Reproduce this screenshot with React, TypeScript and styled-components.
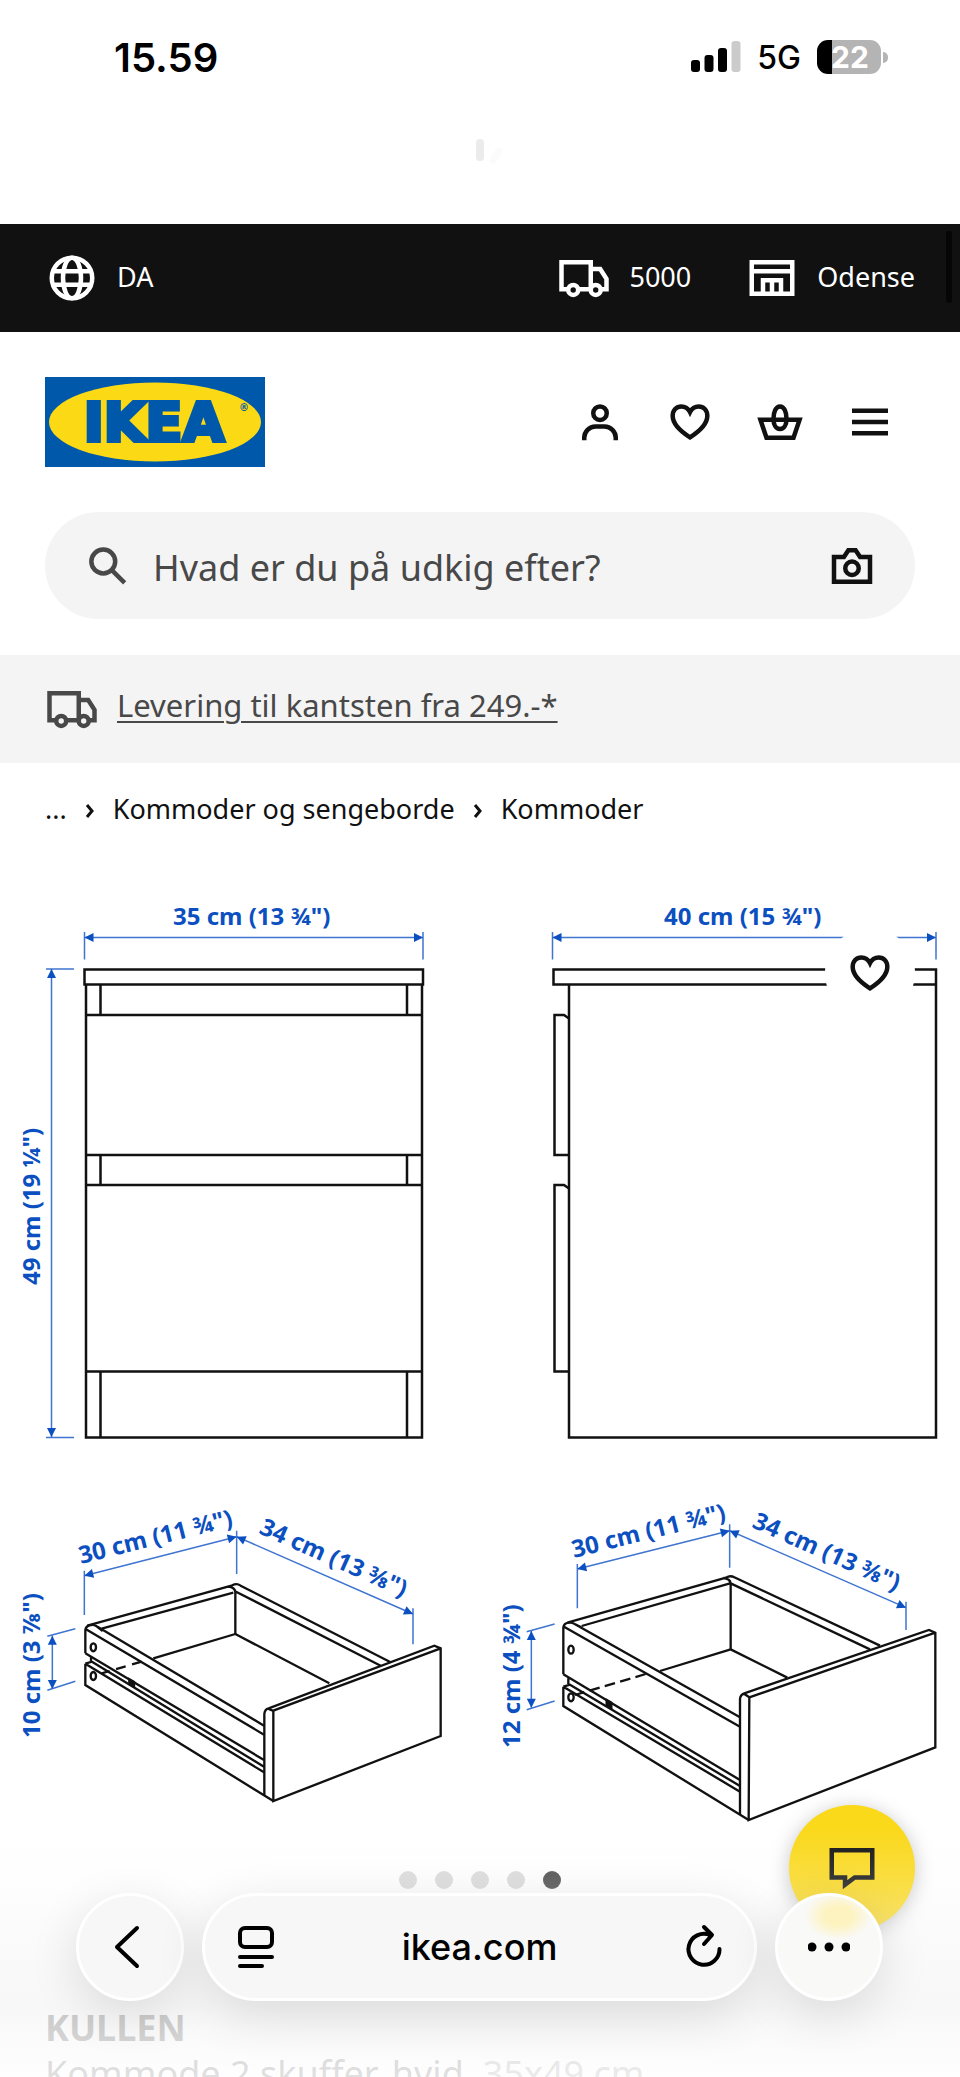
import React from "react";
import styled, { createGlobalStyle, css } from "styled-components";

const uiFont = `Inter, "Liberation Sans", sans-serif`;
const siteFont = `"Noto Sans", "Open Sans", sans-serif`;

const GlobalStyle = createGlobalStyle`
  *, *::before, *::after { box-sizing: border-box; }
  body { margin: 0; background: #fff; }
  button { border: 0; padding: 0; background: none; color: inherit; font: inherit; cursor: pointer; }
  a { color: inherit; text-decoration: none; }
`;

const Screen = styled.div`
  position: relative;
  display: flex;
  flex-direction: column;
  height: 100vh;
  overflow: hidden;
  color: #111;
  background: #fff;
  font-family: ${siteFont};
`;

/* ---------- device status ---------- */

const StatusBar = styled.div`
  flex: none;
  display: flex;
  justify-content: space-between;
  align-items: center;
  height: 114px;
  padding: 0 72px 0 114px;
  color: #000;
  font-family: ${uiFont};
`;

const Clock = styled.time`
  font-size: 40px;
  font-weight: 600;
`;

const StatusIcons = styled.div`
  display: flex;
  align-items: center;
  gap: 16px;
  font-size: 32px;
  font-weight: 500;
`;

const Battery = styled.div`
  display: flex;
  align-items: center;
  gap: 2px;
  &::after {
    content: "";
    width: 5px;
    height: 11px;
    border-radius: 0 5px 5px 0;
    background: #b4b4b4;
  }
`;

const BatteryLevel = styled.div`
  display: flex;
  align-items: center;
  padding-left: 14px;
  width: 64px;
  height: 34px;
  border-radius: 11px;
  background: linear-gradient(90deg, #000 15px, #b4b4b4 15px);
  color: #fff;
  font-size: 30px;
  font-weight: 700;
`;

const RefreshZone = styled.div`
  flex: none;
  display: flex;
  justify-content: center;
  height: 110px;
  padding-top: 24px;
`;

/* ---------- site chrome ---------- */

const Page = styled.main`
  display: flex;
  flex-direction: column;
`;

const IconSvg = styled.svg`
  flex: none;
  display: block;
  width: 54px;
  height: 54px;
  fill: none;
  stroke: currentColor;
  stroke-width: 2;
`;

const TopBar = styled.nav`
  position: relative;
  display: flex;
  align-items: center;
  justify-content: space-between;
  height: 108px;
  padding: 0 45px;
  background: #111;
  color: #fff;
  font-size: 27px;
`;

const ScrollThumb = styled.span`
  position: absolute;
  top: 7px;
  right: 8px;
  width: 6px;
  height: 72px;
  border-radius: 3px;
  background: #060606;
`;

const TopLinks = styled.div`
  display: flex;
  gap: 54px;
`;

const TopLink = styled.a`
  display: flex;
  align-items: center;
  gap: 18px;
  span { padding-bottom: 3px; }
`;

const HeaderRow = styled.header`
  display: flex;
  align-items: center;
  justify-content: space-between;
  height: 180px;
  padding: 0 45px;
`;

const Logo = styled.svg`
  display: block;
  width: 220px;
  height: 90px;
`;

const HeaderActions = styled.div`
  display: flex;
`;

const iconButton = css`
  display: flex;
  align-items: center;
  justify-content: center;
`;

const HeaderButton = styled.button`
  ${iconButton}
  width: 90px;
  height: 90px;
`;

const SearchForm = styled.form`
  display: flex;
  align-items: center;
  gap: 18px;
  height: 107px;
  margin: 0 45px 36px;
  padding: 0 36px;
  border-radius: 54px;
  background: #f4f4f4;
  color: #484848;
`;

const SearchInput = styled.input`
  flex: 1;
  min-width: 0;
  padding: 3px 0 0;
  border: 0;
  outline: 0;
  background: none;
  color: #484848;
  font-family: ${siteFont};
  font-size: 36px;
  &::placeholder { color: #484848; opacity: 1; }
`;

const CameraButton = styled.button`
  ${iconButton}
  color: #111;
`;

const Banner = styled.section`
  display: flex;
  align-items: center;
  gap: 18px;
  height: 108px;
  padding: 0 45px;
  background: #f4f4f4;
  color: #484848;
  a {
    padding-bottom: 9px;
    font-size: 31px;
    text-decoration: underline;
    text-decoration-thickness: 2px;
    text-underline-offset: 4px;
  }
`;

const Breadcrumbs = styled.nav`
  display: flex;
  align-items: center;
  gap: 18px;
  height: 94px;
  padding: 0 45px 3px;
  font-size: 27px;
  svg {
    display: block;
    width: 10px;
    height: 22px;
    fill: none;
    stroke: #111;
    stroke-width: 3;
  }
`;

/* ---------- product ---------- */

const Gallery = styled.section`
  position: relative;
`;

const Drawing = styled.svg`
  display: block;
  width: 100%;
  height: auto;
`;

const FavouriteButton = styled.button`
  ${iconButton}
  position: absolute;
  top: 71px;
  right: 45px;
  width: 90px;
  height: 90px;
  border-radius: 50%;
  background: #fff;
`;

const Dots = styled.div`
  display: flex;
  justify-content: center;
  gap: 18px;
`;

const Dot = styled.button<{ $active?: boolean }>`
  width: 18px;
  height: 18px;
  border-radius: 50%;
  background: ${(p) => (p.$active ? "#484848" : "#dadada")};
`;

const Product = styled.section`
  padding: 116px 45px 0;
  font-size: 36px;
  line-height: 46px;
  white-space: nowrap;
  h1 { margin: 0; font-size: 36px; font-weight: 700; }
  p { margin: 0; color: #2a2a2a; }
  a { color: #767676; }
`;

/* ---------- floating controls ---------- */

const BottomFade = styled.div`
  position: absolute;
  inset: auto 0 0 0;
  height: 250px;
  pointer-events: none;
  background: linear-gradient(
    rgba(252, 252, 252, 0),
    rgba(248, 248, 248, 0.2) 24%,
    rgba(244, 244, 244, 0.42) 44%,
    rgba(246, 246, 246, 0.8) 72%,
    rgba(250, 250, 250, 0.84) 86%,
    rgba(254, 254, 254, 0.86)
  );
`;

const ChatButton = styled.button`
  ${iconButton}
  position: absolute;
  right: 45px;
  bottom: 146px;
  width: 126px;
  height: 126px;
  border-radius: 50%;
  background: #fad81a;
  box-shadow: 0 4px 20px rgba(0, 0, 0, 0.25);
`;

const Toolbar = styled.div`
  position: absolute;
  right: 77px;
  bottom: 76px;
  left: 76px;
  display: flex;
  gap: 18px;
  color: #000;
`;

const glass = css`
  height: 108px;
  border: 3px solid #fff;
  border-radius: 54px;
  background: #f7f7f7;
  box-shadow: 0 14px 50px rgba(0, 0, 0, 0.12);
`;

const RoundButton = styled.button<{ $tinted?: boolean }>`
  ${iconButton}
  ${glass}
  flex: none;
  width: 108px;
  ${(p) =>
    p.$tinted &&
    css`
      background: radial-gradient(ellipse 34px 24px at 60px 20px, #fdf3c0 40%, rgba(253, 243, 192, 0)), #f9f9f8;
    `}
`;

const AddressBar = styled.div`
  ${glass}
  flex: 1;
  display: flex;
  align-items: center;
  justify-content: space-between;
  padding: 0 30px;
`;

const Address = styled.button`
  font-family: ${uiFont};
  font-size: 36px;
  font-weight: 500;
`;

const GlyphSvg = styled.svg`
  display: block;
  width: 42px;
  height: 46px;
  fill: none;
  stroke: currentColor;
  stroke-width: 4;
  stroke-linecap: round;
  stroke-linejoin: round;
`;

/* ---------- icons ---------- */

const TruckIcon = () => (
  <IconSvg viewBox="0 0 24 24" aria-hidden="true">
    <path d="M5 17H2V5h13v12h-5.500M15 8h4.200L22 12.400V17h-2.500M15 17h-5.500" />
    <circle cx="7.200" cy="17.300" r="2.200" />
    <circle cx="17.200" cy="17.300" r="2.200" />
  </IconSvg>
);

const GlobeIcon = () => (
  <IconSvg viewBox="0 0 24 24" aria-hidden="true">
    <circle cx="12" cy="12" r="9" />
    <ellipse cx="12" cy="12" rx="4" ry="9" />
    <path d="M3.500 9h17M3.500 15h17" />
  </IconSvg>
);

const StoreIcon = () => (
  <IconSvg viewBox="0 0 24 24" aria-hidden="true">
    <path d="M3 5h18v14H3zM3 9h18M8 19v-6h8v6M12 13v6" />
  </IconSvg>
);

const PersonIcon = () => (
  <IconSvg viewBox="0 0 24 24" aria-hidden="true">
    <circle cx="12" cy="8.100" r="3" />
    <path d="M5 20.100V19a5 5 0 0 1 5-5h4a5 5 0 0 1 5 5v1.100" />
  </IconSvg>
);

const HeartIcon = () => (
  <IconSvg viewBox="0 0 24 24" aria-hidden="true">
    <path d="M12 18.800C7.600 16 4.300 12.800 4.300 9.200 4.300 6.700 6 5.100 8.100 5.100c1.700 0 3.100.9 3.900 2.500.8-1.600 2.200-2.500 3.900-2.500 2.100 0 3.800 1.600 3.800 4.100 0 3.600-3.300 6.800-7.700 9.600z" />
  </IconSvg>
);

const BasketIcon = () => (
  <IconSvg viewBox="0 0 24 24" aria-hidden="true">
    <path d="M3.300 11h17.400l-2.700 8H6z" />
    <path d="M12 5.100c1.800 0 2.900 2.400 2.900 5.400 0 2.700-1.100 4.600-2.900 4.600s-2.900-1.900-2.900-4.600c0-3 1.100-5.400 2.900-5.400z" />
  </IconSvg>
);

const MenuIcon = () => (
  <IconSvg viewBox="0 0 24 24" aria-hidden="true">
    <path d="M4 7h16M4 12h16M4 17h16" />
  </IconSvg>
);

const SearchIcon = () => (
  <IconSvg viewBox="0 0 24 24" aria-hidden="true">
    <circle cx="9.900" cy="10" r="5.300" />
    <path d="M13.700 13.800l5.700 5.700" />
  </IconSvg>
);

const CameraIcon = () => (
  <IconSvg viewBox="0 0 24 24" aria-hidden="true">
    <path d="M4 8h4.400l2-3h3.200l2 3H20v11H4z" />
    <circle cx="12" cy="13" r="3" />
  </IconSvg>
);

const ChatIcon = () => (
  <IconSvg viewBox="0 0 24 24" aria-hidden="true">
    <path d="M3 4.100h18v12.100h-7.800L8.900 19.400v-3.200H3z" />
  </IconSvg>
);

const Chevron = () => (
  <svg viewBox="0 0 10 22" aria-hidden="true">
    <path d="M2 7l5 6-5 6" />
  </svg>
);

const IkeaLogo = () => (
  <Logo viewBox="0 0 220 90" role="img" aria-label="IKEA">
    <rect width="220" height="90" fill="#0058ab" />
    <ellipse cx="110" cy="45" rx="106" ry="39.500" fill="#fbd914" />
    <text
      x="109"
      y="64"
      textAnchor="middle"
      fontFamily={`"DejaVu Sans", sans-serif`}
      fontSize="54"
      fontWeight="700"
      fill="#0058ab"
      stroke="#0058ab"
      strokeWidth="4"
    >
      IKEA
    </text>
    <text x="194" y="34" fontFamily={`"DejaVu Sans", sans-serif`} fontSize="10" fontWeight="700" fill="#0058ab">
      ®
    </text>
  </Logo>
);

/* ---------- measurement drawing ---------- */

const BLUE = "#0b4fc0";

type Point = [number, number];

const Measure = ({ from, to, size = 9 }: { from: Point; to: Point; size?: number }) => {
  const angle = (Math.atan2(to[1] - from[1], to[0] - from[0]) * 180) / Math.PI;
  const head = `M0 0L${size} ${-size / 2}V${size / 2}z`;
  return (
    <g>
      <path d={`M${from}L${to}`} stroke="#3f74d0" strokeWidth={size / 6} />
      <path d={head} fill={BLUE} stroke="none" transform={`translate(${from}) rotate(${angle})`} />
      <path d={head} fill={BLUE} stroke="none" transform={`translate(${to}) rotate(${angle + 180})`} />
    </g>
  );
};

const Label = ({ at, angle = 0, children }: { at: Point; angle?: number; children: string }) => (
  <text
    transform={`translate(${at}) rotate(${angle})`}
    fontFamily={siteFont}
    fontSize="24"
    fontWeight="700"
    fill={BLUE}
  >
    {children}
  </text>
);

const MeasurementDrawing = () => (
  <Drawing viewBox="0 857 960 1014" role="img" aria-label="Mål på KULLEN kommode">
    <g fill="none" stroke="#111" strokeWidth="2.500">
      <path d="M84.500 969.500H423V984.500H84.500zM86 984.500V1437.500H422V984.500" />
      <path d="M86 1015H422M86 1155H422M86 1185H422M86 1371.500H422" />
      <path d="M100.500 984.500V1015M407 984.500V1015M100.500 1155V1185M407 1155V1185M100.500 1371.500V1437M407 1371.500V1437" />
      <path d="M553.500 969.500H936V984.500H553.500zM569 984.500V1437.500H936V984.500" />
      <path d="M569 1018.500L564 1015H554.500V1155H569M569 1188.500L564 1185H554.500V1371.500H569" />
    </g>
    <path
      d="M84.500 932V959.500M423 932V959.500M46 969H74M46 1437.500H74M552.500 932V959.500M936 932V959.500"
      stroke="#3f74d0"
      strokeWidth="1.500"
    />
    <Measure from={[84.5, 937.5]} to={[423, 937.5]} />
    <Measure from={[552.5, 937.5]} to={[936, 937.5]} />
    <Measure from={[51.5, 969]} to={[51.5, 1437]} />
    <Label at={[173, 925]}>35 cm (13 ¾")</Label>
    <Label at={[664, 925]}>40 cm (15 ¾")</Label>
    <Label at={[40, 1285]} angle={-90}>49 cm (19 ¼")</Label>

    <g transform="translate(0 1480) scale(.33333)" fill="none" stroke="#111" strokeWidth="7">
      <path d="M262 437L697 316q13-8 25 1L1172 547M305 446L700 338M685 320q20 2 21 17V462M708 335L1142 557" />
      <path d="M706 462L460 535M706 462L988 610" />
      <path d="M256 520V450q2-14 18-15 8-1 16 4L792 737M258 448L792 764M290 439l18 14" />
      <path d="M256 520L792 840M273 530V547M256 551L792 877M256 551l20-6L792 860M256 551V615L820 963" />
      <path d="M425 545L305 580" strokeDasharray="30 20" />
      <path d="M388 598l14 8v14l-14-8z" fill="#111" />
      <ellipse cx="280" cy="502" rx="8" ry="12" />
      <ellipse cx="280" cy="588" rx="8" ry="12" />
      <path d="M793 948V702q1-14 13-17L1303 497L1322 505V768L820 963V692L1322 505M804 686L820 693" />
      <path
        d="M253 272V405M710 152V282M1239 385V493M142 469L226 446M142 631L226 604"
        stroke="#3f74d0"
        strokeWidth="4.500"
      />
      <Measure from={[253, 287]} to={[710, 170]} size={27} />
      <Measure from={[710, 170]} to={[1239, 402]} size={27} />
      <Measure from={[157, 467]} to={[157, 627]} size={27} />
    </g>
    <Label at={[81, 1564]} angle={-14}>30 cm (11 ¾")</Label>
    <Label at={[258, 1533]} angle={24}>34 cm (13 ⅜")</Label>
    <Label at={[40, 1738]} angle={-90}>10 cm (3 ⅞")</Label>

    <g transform="translate(480 1480) scale(.33333)" fill="none" stroke="#111" strokeWidth="7">
      <path d="M262 428L738 293q13-8 25-1L1200 497M305 438L750 310M730 294q20 2 22 16V508M752 310L1170 508" />
      <path d="M752 508L540 573M752 508L922 593" />
      <path d="M250 583V442q2-13 18-14 8-1 16 4L780 712M252 440L780 740M284 432l20 10" />
      <path d="M250 583L780 900M265 595V612M250 620L780 935M250 620l20-6L780 918M250 620V678L806 1020" />
      <path d="M497 582L285 645" strokeDasharray="32 16" />
      <path d="M380 660l14 8v16l-14-8z" fill="#111" />
      <ellipse cx="273" cy="509" rx="8" ry="12" />
      <ellipse cx="273" cy="652" rx="8" ry="12" />
      <path d="M780 1005V657q1-13 13-17L1347 450L1366 458V802L806 1020L808 652L1366 458M792 641L808 652" />
      <path
        d="M292 252V385M749 133V263M1278 365V450M140 455L224 432M140 689L224 663"
        stroke="#3f74d0"
        strokeWidth="4.500"
      />
      <Measure from={[292, 267]} to={[749, 152]} size={27} />
      <Measure from={[749, 152]} to={[1278, 383]} size={27} />
      <Measure from={[154, 453]} to={[154, 683]} size={27} />
    </g>
    <Label at={[574, 1558]} angle={-14}>30 cm (11 ¾")</Label>
    <Label at={[751, 1527]} angle={24}>34 cm (13 ⅜")</Label>
    <Label at={[520, 1748]} angle={-90}>12 cm (4 ¾")</Label>
  </Drawing>
);

export default function App() {
  return (
    <Screen>
      <GlobalStyle />
      <StatusBar>
        <Clock>15.59</Clock>
        <StatusIcons>
          <svg width="50" height="32" viewBox="0 0 50 32" aria-hidden="true">
            <rect x="0" y="19" width="9" height="12" rx="3" />
            <rect x="13.500" y="14" width="9" height="17" rx="3" />
            <rect x="27" y="7" width="9" height="24" rx="3" />
            <rect x="40.500" y="0" width="9" height="31" rx="3" fill="#cbcbcb" />
          </svg>
          <span>5G</span>
          <Battery>
            <BatteryLevel>22</BatteryLevel>
          </Battery>
        </StatusIcons>
      </StatusBar>
      <RefreshZone>
        <svg width="44" height="44" viewBox="0 0 44 44" aria-hidden="true">
          <path d="M22 5v14" stroke="#ebebeb" strokeWidth="8" strokeLinecap="round" />
          <path d="M41 13l-6 9" stroke="#fbfbfb" strokeWidth="7" strokeLinecap="round" />
        </svg>
      </RefreshZone>

      <Page>
        <TopBar>
          <TopLink href="#sprog">
            <GlobeIcon />
            <span>DA</span>
          </TopLink>
          <TopLinks>
            <TopLink href="#postnummer">
              <TruckIcon />
              <span>5000</span>
            </TopLink>
            <TopLink href="#varehus">
              <StoreIcon />
              <span>Odense</span>
            </TopLink>
          </TopLinks>
          <ScrollThumb />
        </TopBar>

        <HeaderRow>
          <a href="#forside">
            <IkeaLogo />
          </a>
          <HeaderActions>
            <HeaderButton aria-label="Log ind"><PersonIcon /></HeaderButton>
            <HeaderButton aria-label="Favoritter"><HeartIcon /></HeaderButton>
            <HeaderButton aria-label="Kurv"><BasketIcon /></HeaderButton>
            <HeaderButton aria-label="Menu"><MenuIcon /></HeaderButton>
          </HeaderActions>
        </HeaderRow>

        <SearchForm role="search">
          <SearchIcon />
          <SearchInput type="search" aria-label="Søg" placeholder="Hvad er du på udkig efter?" />
          <CameraButton type="button" aria-label="Søg med billede"><CameraIcon /></CameraButton>
        </SearchForm>

        <Banner>
          <TruckIcon />
          <a href="#levering">Levering til kantsten fra 249.-*</a>
        </Banner>

        <Breadcrumbs aria-label="Brødkrummer">
          <a href="#produkter">...</a>
          <Chevron />
          <a href="#sengeborde">Kommoder og sengeborde</a>
          <Chevron />
          <a href="#kommoder">Kommoder</a>
        </Breadcrumbs>

        <Gallery>
          <MeasurementDrawing />
          <FavouriteButton aria-label="Gem som favorit"><HeartIcon /></FavouriteButton>
        </Gallery>
        <Dots>
          {[1, 2, 3, 4, 5].map((n) => (
            <Dot key={n} $active={n === 5} aria-label={`Billede ${n}`} />
          ))}
        </Dots>
        <Product>
          <h1>KULLEN</h1>
          <p>
            Kommode 2 skuffer, hvid, <a href="#maal">35x49 cm</a>
          </p>
        </Product>
      </Page>

      <ChatButton aria-label="Chat"><ChatIcon /></ChatButton>
      <BottomFade />

      <Toolbar>
        <RoundButton aria-label="Tilbage">
          <GlyphSvg viewBox="0 0 42 46"><path d="M28 4L8 23l20 19" /></GlyphSvg>
        </RoundButton>
        <AddressBar>
          <button aria-label="Sidemenu">
            <GlyphSvg viewBox="0 0 42 46">
              <rect x="5" y="4" width="32" height="19" rx="5" />
              <path d="M5 33h32M5 42h22" />
            </GlyphSvg>
          </button>
          <Address>ikea.com</Address>
          <button aria-label="Genindlæs">
            <GlyphSvg viewBox="0 0 42 46">
              <path d="M28 11A15.500 15.500 0 1 0 37.500 25M22 3l8 8-8 9" />
            </GlyphSvg>
          </button>
        </AddressBar>
        <RoundButton $tinted aria-label="Mere">
          <GlyphSvg viewBox="0 0 42 46">
            <g fill="currentColor" stroke="none">
              <circle cx="4" cy="23" r="4.500" />
              <circle cx="21" cy="23" r="4.500" />
              <circle cx="38" cy="23" r="4.500" />
            </g>
          </GlyphSvg>
        </RoundButton>
      </Toolbar>
    </Screen>
  );
}
